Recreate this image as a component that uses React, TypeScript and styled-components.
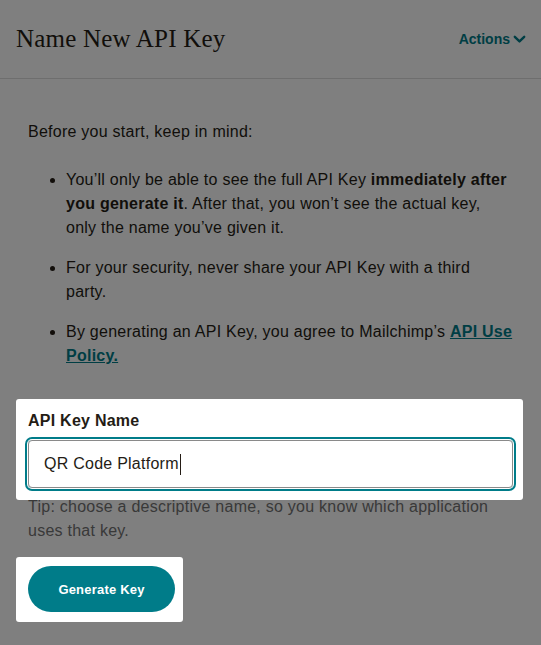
import styled, { createGlobalStyle } from "styled-components";

const GlobalStyle = createGlobalStyle`
  html,
  body {
    margin: 0;
    background: #ffffff;
  }

  body {
    font-family: "Liberation Sans", Arial, sans-serif;
    letter-spacing: 0.25px;
    color: #241c15;
  }

  * {
    box-sizing: border-box;
  }
`;

const Header = styled.header`
  display: flex;
  align-items: center;
  justify-content: space-between;
  height: 79px;
  padding: 0 15px 0 16px;
  border-bottom: 1px solid #dcdcdc;
`;

const Title = styled.h1`
  margin: 0;
  font-family: "Liberation Serif", "Times New Roman", serif;
  font-weight: 400;
  font-size: 25px;
  letter-spacing: 0.2px;
  color: #241c15;
`;

const ActionsButton = styled.button`
  display: flex;
  align-items: center;
  gap: 3px;
  padding: 0;
  border: 0;
  background: none;
  font: 700 14px "Liberation Sans", Arial, sans-serif;
  color: #007c89;
  cursor: pointer;
`;

const Main = styled.main`
  padding: 41px 28px 24px;
  font-size: 16px;
  line-height: 24px;
`;

const Intro = styled.p`
  margin: 0 0 24px;
`;

const Notes = styled.ul`
  margin: 0 0 31px;
  padding-left: 38px;

  li + li {
    margin-top: 16px;
  }
`;

const PolicyLink = styled.a`
  font-weight: 700;
  color: #007c89;
  text-decoration: underline;
`;

// dims everything that is not part of the current tour step
const Overlay = styled.div`
  position: fixed;
  inset: 0;
  background: rgba(0, 0, 0, 0.5);
  z-index: 10;
`;

const Spotlight = styled.div<{ $pad: string }>`
  position: relative;
  z-index: 11;
  background: #ffffff;
  border-radius: 3px;
  padding: ${(p) => p.$pad};
`;

const FieldSpot = styled(Spotlight)`
  margin: 0 -10px 0 -12px;
`;

const ButtonSpot = styled(Spotlight)`
  width: fit-content;
  margin: 14px 0 0 -12px;
`;

const Label = styled.label`
  display: block;
  margin-bottom: 7px;
  font-weight: 700;
  font-size: 16px;
  line-height: 24px;
`;

const TextField = styled.div`
  display: flex;
  align-items: center;
  height: 48px;
  margin-right: -2px;
  padding: 0 15px;
  border: 1px solid #8a8a8a;
  border-radius: 4px;
  box-shadow: 0 0 0 1px #ffffff, 0 0 0 3px #007c89;
  font-size: 16px;
  color: #241c15;
`;

const Caret = styled.span`
  display: inline-block;
  width: 1px;
  height: 21px;
  margin-left: 1px;
  background: #241c15;
`;

const Tip = styled.p`
  margin: -5px 0 0;
  color: #727272;
`;

const PrimaryButton = styled.button`
  width: 147px;
  height: 46px;
  border: 0;
  border-radius: 23px;
  background: #007c89;
  color: #ffffff;
  font: 700 13px "Liberation Sans", Arial, sans-serif;
  letter-spacing: 0.2px;
  cursor: pointer;
`;

const Chevron = () => (
  <svg width="13" height="9" viewBox="0 0 13 9" aria-hidden="true">
    <path
      d="M1.8 1.8 L6.5 6.4 L11.2 1.8"
      fill="none"
      stroke="currentColor"
      strokeWidth="2.4"
      strokeLinecap="round"
      strokeLinejoin="round"
    />
  </svg>
);

export default function App() {
  return (
    <>
      <GlobalStyle />
      <Header>
        <Title>Name New API Key</Title>
        <ActionsButton>
          Actions
          <Chevron />
        </ActionsButton>
      </Header>
      <Main>
        <Intro>Before you start, keep in mind:</Intro>
        <Notes>
          <li>
            You’ll only be able to see the full API Key{" "}
            <b>immediately after you generate it</b>. After that, you won’t see
            the actual key, only the name you’ve given it.
          </li>
          <li>For your security, never share your API Key with a third party.</li>
          <li>
            By generating an API Key, you agree to Mailchimp’s{" "}
            <PolicyLink href="#">API Use Policy.</PolicyLink>
          </li>
        </Notes>
        <FieldSpot $pad="10px 12px 12px">
          <Label>API Key Name</Label>
          <TextField>
            QR Code Platform
            <Caret />
          </TextField>
        </FieldSpot>
        <Tip>
          Tip: choose a descriptive name, so you know which application uses
          that key.
        </Tip>
        <ButtonSpot $pad="9px 8px 10px 12px">
          <PrimaryButton>Generate Key</PrimaryButton>
        </ButtonSpot>
      </Main>
      <Overlay />
    </>
  );
}
